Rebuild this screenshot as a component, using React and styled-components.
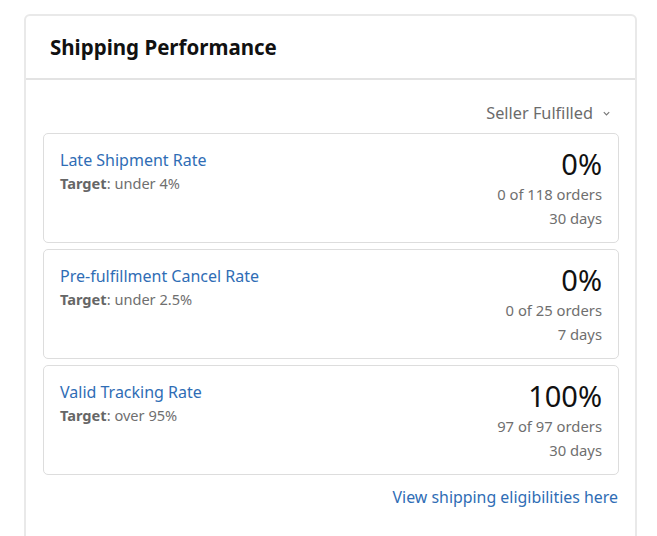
import React from "react";
import styled, { createGlobalStyle } from "styled-components";

const GlobalStyle = createGlobalStyle`
  body {
    margin: 0;
    background: #ffffff;
    font-family: "Noto Sans", "Open Sans", sans-serif;
  }
`;

const Page = styled.div`
  width: 657px;
  height: 536px;
  overflow: hidden;
  padding: 14px 20px 0 24px;
  box-sizing: border-box;
`;

const Panel = styled.section`
  border: 2px solid #e9e9e9;
  border-radius: 6px;
  height: 560px;
  box-sizing: border-box;
`;

const PanelHeader = styled.header`
  height: 62px;
  display: flex;
  align-items: center;
  padding: 0 24px;
  border-bottom: 2px solid #e3e3e3;
`;

const Title = styled.h2`
  margin: 0;
  font-size: 20.5px;
  font-weight: 700;
  color: #111111;
  margin-bottom: 1px;
`;

const PanelBody = styled.div`
  padding: 21px 16px 0 17px;
  display: flex;
  flex-direction: column;
`;

const FilterRow = styled.div`
  display: flex;
  justify-content: flex-end;
  align-items: center;
  gap: 9px;
  padding-right: 8px;
  height: 24px;
  margin-bottom: 8px;
  color: #6b6b6b;
  font-size: 16.3px;
`;

const Chevron = styled.svg`
  width: 9px;
  height: 9px;
  margin-top: 1px;
`;

const MetricList = styled.div`
  display: flex;
  flex-direction: column;
  gap: 6px;
`;

const MetricCard = styled.div`
  height: 110px;
  box-sizing: border-box;
  border: 1px solid #dddddd;
  border-radius: 5px;
  display: flex;
  justify-content: space-between;
  padding: 15px 16px 0 16px;
`;

const MetricLeft = styled.div`
  display: flex;
  flex-direction: column;
`;

const MetricName = styled.a`
  color: #2f6db5;
  font-size: 16px;
  line-height: 22px;
  text-decoration: none;
`;

const Target = styled.div`
  color: #6f6f6f;
  font-size: 14.6px;
  line-height: 20px;
  margin-top: 2px;

  b {
    font-weight: 700;
    color: #666666;
  }
`;

const MetricRight = styled.div`
  display: flex;
  flex-direction: column;
  align-items: flex-end;
  margin-top: -1px;
`;

const Value = styled.div`
  font-size: 29px;
  line-height: 32px;
  color: #111111;
  margin-bottom: 2px;
`;

const Detail = styled.div`
  font-size: 14.8px;
  line-height: 24px;
  color: #6f6f6f;
`;

const FooterLink = styled.a`
  align-self: flex-end;
  margin-top: 11px;
  margin-right: 1px;
  color: #2f6db5;
  font-size: 15.9px;
  text-decoration: none;
`;

const metrics = [
  { name: "Late Shipment Rate", target: "under 4%", value: "0%", orders: "0 of 118 orders", days: "30 days" },
  { name: "Pre-fulfillment Cancel Rate", target: "under 2.5%", value: "0%", orders: "0 of 25 orders", days: "7 days" },
  { name: "Valid Tracking Rate", target: "over 95%", value: "100%", orders: "97 of 97 orders", days: "30 days" },
];

export default function App() {
  return (
    <>
      <GlobalStyle />
      <Page>
        <Panel>
          <PanelHeader>
            <Title>Shipping Performance</Title>
          </PanelHeader>
          <PanelBody>
            <FilterRow>
              Seller Fulfilled
              <Chevron viewBox="0 0 10 10">
                <path d="M2 3.5 L5 6.5 L8 3.5" fill="none" stroke="#777" strokeWidth="1.3" />
              </Chevron>
            </FilterRow>
            <MetricList>
              {metrics.map((m) => (
                <MetricCard key={m.name}>
                  <MetricLeft>
                    <MetricName href="#">{m.name}</MetricName>
                    <Target>
                      <b>Target</b>: {m.target}
                    </Target>
                  </MetricLeft>
                  <MetricRight>
                    <Value>{m.value}</Value>
                    <Detail>{m.orders}</Detail>
                    <Detail>{m.days}</Detail>
                  </MetricRight>
                </MetricCard>
              ))}
            </MetricList>
            <FooterLink href="#">View shipping eligibilities here</FooterLink>
          </PanelBody>
        </Panel>
      </Page>
    </>
  );
}
